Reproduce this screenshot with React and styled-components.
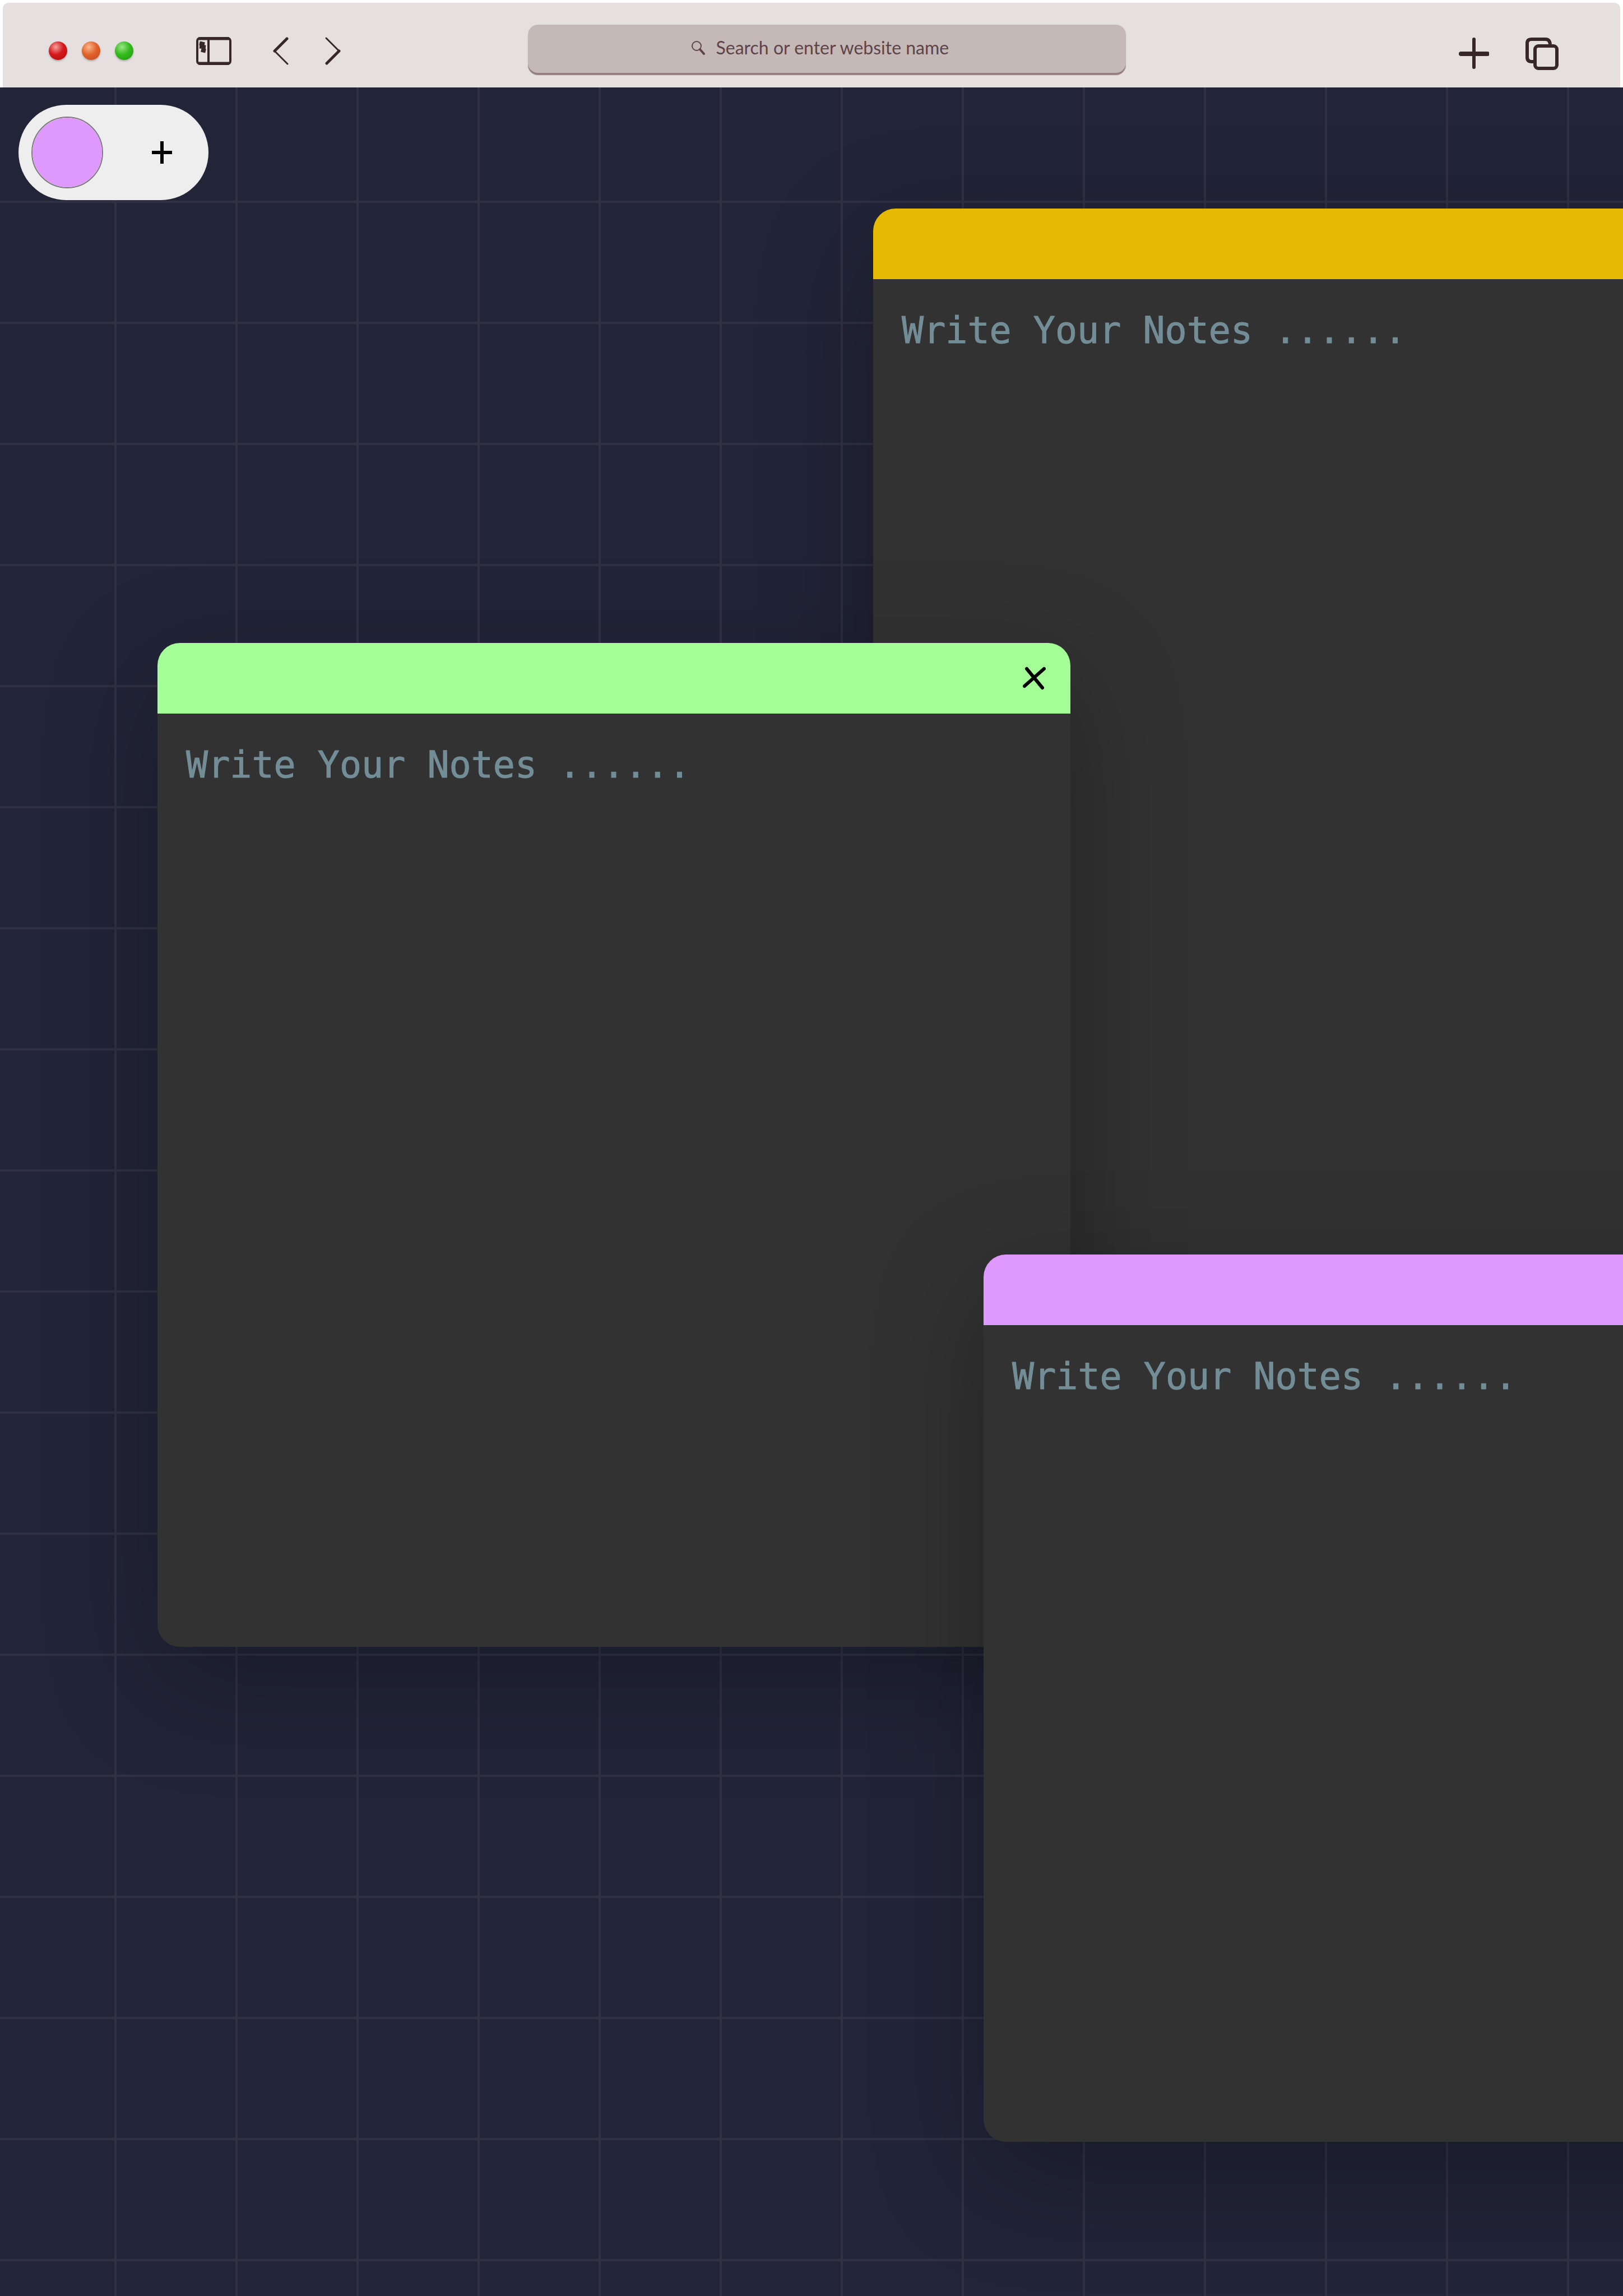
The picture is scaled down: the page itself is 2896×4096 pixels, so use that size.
import React, { useState } from "react";
import styled, { createGlobalStyle } from "styled-components";

const GlobalStyle = createGlobalStyle`
  *, *::before, *::after { box-sizing: border-box; }
  body { margin: 0; background: #fff; font-family: Lato, "Liberation Sans", sans-serif; }
  button { border: 0; padding: 0; background: none; color: inherit; cursor: pointer; }
  svg { display: block; }
`;

const Page = styled.div`
  display: flex;
  flex-direction: column;
  height: 100vh;
  overflow: hidden;
`;

const BrowserBar = styled.header`
  display: grid;
  grid-template-columns: 937fr 1067fr 882fr;
  align-items: center;
  flex: none;
  height: 151px;
  margin: 5px 5px 0;
  padding-top: 20px;
  border-radius: 10px 10px 0 0;
  background: #e5e0df;
  color: #38272a;
`;

const BarStart = styled.div`
  display: flex;
  align-items: center;
  gap: 112px;
  padding-left: 82px;
`;

const Lights = styled.div`
  display: flex;
  gap: 26px;
`;

const Light = styled.button`
  width: 33px;
  height: 33px;
  border-radius: 50%;
  background: radial-gradient(circle at 38% 30%, ${(p) => p.$shine} 0%, ${(p) => p.$tone} 45%, ${(p) => p.$edge} 100%);
  box-shadow: 0 2px 3px rgba(90, 70, 70, 0.35);
`;

const BarTools = styled.div`
  display: flex;
  align-items: center;
  gap: 74px;
`;

const History = styled.nav`
  display: flex;
  gap: 65px;
`;

const IconButton = styled.button`
  display: flex;
`;

const Search = styled.label`
  display: flex;
  align-items: center;
  justify-content: center;
  gap: 20px;
  height: 86px;
  margin-bottom: 8px;
  padding: 0 20px 4px 0;
  border-radius: 18px;
  background: #c5b9b8;
  box-shadow: 0 4px 1px #967f81;
  color: #5d4448;
`;

const SearchInput = styled.input`
  width: 420px;
  height: 44px;
  padding: 0;
  border: 0;
  outline: 0;
  background: transparent;
  color: inherit;
  font: 32px/44px Lato, "Liberation Sans", sans-serif;

  &::placeholder { color: inherit; opacity: 1; }
`;

const BarEnd = styled.div`
  display: flex;
  align-items: center;
  justify-content: flex-end;
  gap: 65px;
  padding: 10px 110px 0 0;
`;

const Board = styled.main`
  position: relative;
  flex: 1;
  min-height: 0;
  padding: 31px 33px;
  overflow: hidden;
  background-color: #222538;
  background-image:
    linear-gradient(to right, #323144 4px, transparent 4px),
    linear-gradient(to bottom, #323144 4px, transparent 4px);
  background-size: 216px 216px;
  background-position: 204px 202px;
`;

const Creator = styled.form`
  display: flex;
  align-items: center;
  gap: 22px;
  width: 339px;
  height: 170px;
  padding-left: 23px;
  border-radius: 85px;
  background: #eee;
`;

const ColorPicker = styled.input`
  appearance: none;
  flex: none;
  width: 128px;
  height: 128px;
  padding: 0;
  border: 2px solid #7d7780;
  border-radius: 50%;
  overflow: hidden;
  background: none;

  &::-webkit-color-swatch-wrapper { padding: 0; }
  &::-webkit-color-swatch { border: 0; border-radius: 50%; }
`;

const AddButton = styled.button`
  display: grid;
  place-items: center;
  flex: 1;
  height: 100%;
  color: #000;
`;

const NoteCard = styled.article`
  position: absolute;
  left: ${(p) => p.$x}px;
  top: ${(p) => p.$y}px;
  display: flex;
  flex-direction: column;
  width: 1629px;
  height: ${(p) => p.$height}px;
  border-radius: 40px;
  overflow: hidden;
  background: #323232;
  box-shadow: 0 60px 200px rgba(0, 0, 0, 0.3);
`;

const NoteHeader = styled.div`
  display: flex;
  align-items: center;
  justify-content: flex-end;
  flex: none;
  height: 126px;
  padding-right: 44px;
  background: ${(p) => p.$color};
  color: #000;
`;

const NoteText = styled.textarea`
  flex: 1;
  width: 100%;
  padding: 54px 51px;
  border: 0;
  outline: 0;
  resize: none;
  background: transparent;
  color: #dde3e6;
  font: 65px/76px "DejaVu Sans Mono", "Liberation Mono", monospace;

  &::placeholder {
    color: #738d97;
    opacity: 1;
    -webkit-text-stroke: 1px #738d97;
  }
`;

const lights = [
  { label: "Close window", shine: "#f4a09c", tone: "#d4171b", edge: "#b30d12" },
  { label: "Minimize window", shine: "#f8b98c", tone: "#e2622a", edge: "#bf4a1b" },
  { label: "Zoom window", shine: "#9be58a", tone: "#33bb1c", edge: "#1f9410" },
];

const notes = [
  { id: 1, name: "Yellow note", color: "#e5b904", x: 1558, y: 216, height: 1950 },
  { id: 2, name: "Green note", color: "#a5fd98", x: 281, y: 991, height: 1791, closable: true },
  { id: 3, name: "Purple note", color: "#df99fc", x: 1755, y: 2082, height: 1583 },
];

const SidebarIcon = () => (
  <svg width="63" height="52" viewBox="0 0 63 52" fill="none" stroke="currentColor" strokeWidth="4">
    <rect x="2" y="3" width="59" height="46" rx="5" />
    <path d="M4 4h55M4 48h55" strokeWidth="5" />
    <path d="M22 3v46" />
    <path d="M6 12l9 2M6 18l11 1M9 24l8 2" strokeWidth="7" />
  </svg>
);

const BackIcon = () => (
  <svg width="28" height="50" viewBox="0 0 28 50" fill="none" stroke="currentColor" strokeLinecap="round">
    <path d="M25 3L3 25" strokeWidth="5" />
    <path d="M3 25l23 23" strokeWidth="3" />
  </svg>
);

const ForwardIcon = () => (
  <svg width="28" height="50" viewBox="0 0 28 50" fill="none" stroke="currentColor" strokeLinecap="round">
    <path d="M2 2l23 23" strokeWidth="3" />
    <path d="M25 25L3 47" strokeWidth="5" />
  </svg>
);

const SearchIcon = () => (
  <svg width="24" height="26" viewBox="0 0 24 26" fill="none" stroke="currentColor" strokeWidth="2" strokeLinecap="round">
    <circle cx="9" cy="10" r="8" />
    <path d="M15 16l7 8" strokeWidth="4" />
  </svg>
);

const NewTabIcon = () => (
  <svg width="54" height="57" viewBox="0 0 54 57" fill="none" stroke="currentColor" strokeLinecap="round">
    <path d="M4 29h47" strokeWidth="8" />
    <path d="M27 3v50" strokeWidth="6" />
  </svg>
);

const TabsIcon = () => (
  <svg width="59" height="60" viewBox="0 0 59 60" fill="none" stroke="currentColor" strokeWidth="6">
    <path d="M15 44h-4q-8 0-8-8V11q0-7 8-7h25q7 0 8 9" />
    <rect x="17" y="16" width="39" height="40" rx="6" />
  </svg>
);

const PlusIcon = () => (
  <svg width="36" height="40" viewBox="0 0 36 40" fill="none" stroke="currentColor">
    <path d="M0 20h36" strokeWidth="6" />
    <path d="M18 0v40" strokeWidth="6" />
  </svg>
);

const CloseIcon = () => (
  <svg width="41" height="42" viewBox="0 0 41 42" fill="none" stroke="currentColor" strokeWidth="6" strokeLinecap="round">
    <path d="M7 4l28 34M38 4L3 35" />
  </svg>
);

function Note({ note }) {
  return (
    <NoteCard $x={note.x} $y={note.y} $height={note.height}>
      <NoteHeader $color={note.color}>
        {note.closable && (
          <IconButton type="button" aria-label="Delete note">
            <CloseIcon />
          </IconButton>
        )}
      </NoteHeader>
      <NoteText aria-label={note.name} placeholder="Write Your Notes ......" spellCheck={false} />
    </NoteCard>
  );
}

export default function App() {
  const [color, setColor] = useState("#df99fc");

  return (
    <Page>
      <GlobalStyle />
      <BrowserBar>
        <BarStart>
          <Lights>
            {lights.map((l) => (
              <Light key={l.label} type="button" aria-label={l.label} $shine={l.shine} $tone={l.tone} $edge={l.edge} />
            ))}
          </Lights>
          <BarTools>
            <IconButton type="button" aria-label="Toggle sidebar"><SidebarIcon /></IconButton>
            <History aria-label="History">
              <IconButton type="button" aria-label="Back"><BackIcon /></IconButton>
              <IconButton type="button" aria-label="Forward"><ForwardIcon /></IconButton>
            </History>
          </BarTools>
        </BarStart>
        <Search>
          <SearchIcon />
          <SearchInput type="text" aria-label="Address" placeholder="Search or enter website name" />
        </Search>
        <BarEnd>
          <IconButton type="button" aria-label="New tab"><NewTabIcon /></IconButton>
          <IconButton type="button" aria-label="Show tabs"><TabsIcon /></IconButton>
        </BarEnd>
      </BrowserBar>
      <Board>
        <Creator onSubmit={(e) => e.preventDefault()}>
          <ColorPicker type="color" aria-label="Note color" value={color} onChange={(e) => setColor(e.target.value)} />
          <AddButton type="submit" aria-label="Add note"><PlusIcon /></AddButton>
        </Creator>
        {notes.map((note) => (
          <Note key={note.id} note={note} />
        ))}
      </Board>
    </Page>
  );
}
